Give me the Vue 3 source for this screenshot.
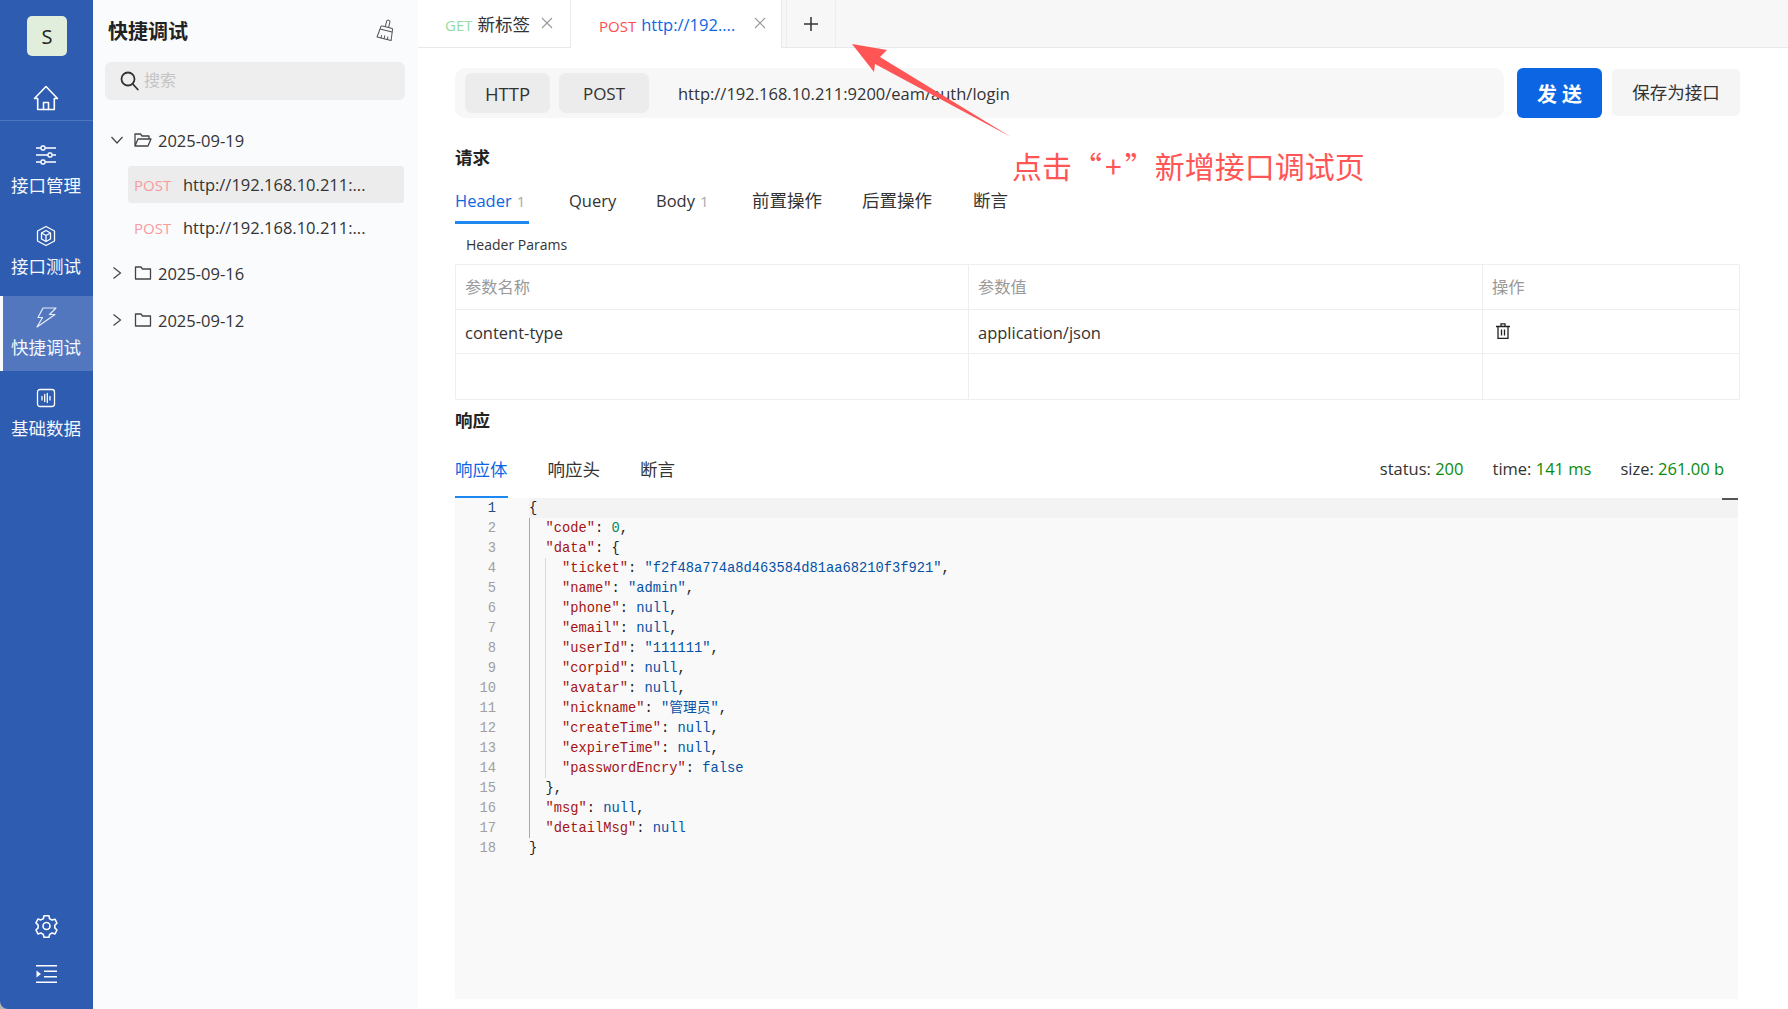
<script setup>
const navItems = [
  { key: 'api', label: '接口管理' },
  { key: 'test', label: '接口测试' },
  { key: 'quick', label: '快捷调试', active: true },
  { key: 'data', label: '基础数据' },
]
const reqTabs = [
  { label: 'Header', count: 1, active: true, lat: true, w: 74 },
  { label: 'Query', lat: true, w: 47 },
  { label: 'Body', count: 1, lat: true, w: 56 },
  { label: '前置操作', w: 70 },
  { label: '后置操作', w: 71 },
  { label: '断言', w: 35 },
]
const K = 'k', S = 's', N = 'n', V = 'v', P = 'p'
const kv = (ind, key, val, type, comma = true) => [
  [P, ind], [K, `"${key}"`], [P, ': '], [type, val], ...(comma ? [[P, ',']] : []),
]
const lines = [
  [[P, '{']],
  kv('  ', 'code', '0', N),
  [[P, '  '], [K, '"data"'], [P, ': {']],
  kv('    ', 'ticket', '"f2f48a774a8d463584d81aa68210f3f921"', S),
  kv('    ', 'name', '"admin"', S),
  kv('    ', 'phone', 'null', V),
  kv('    ', 'email', 'null', V),
  kv('    ', 'userId', '"111111"', S),
  kv('    ', 'corpid', 'null', V),
  kv('    ', 'avatar', 'null', V),
  kv('    ', 'nickname', '"管理员"', S),
  kv('    ', 'createTime', 'null', V),
  kv('    ', 'expireTime', 'null', V),
  kv('    ', 'passwordEncry', 'false', V, false),
  [[P, '  },']],
  kv('  ', 'msg', 'null', V),
  kv('  ', 'detailMsg', 'null', V, false),
  [[P, '}']],
]
</script>

<template>
  <div class="app">
    <aside class="side">
      <div class="logo-wrap"><div class="logo">S</div></div>
      <div class="home">
        <svg width="26" height="26" viewBox="0 0 26 26" fill="none" stroke="#fff" stroke-width="1.6" stroke-linejoin="round" stroke-linecap="round">
          <path d="M1.5 13.5 13 1.5l11.5 12h-3.2V24.5H4.7V13.5z" />
          <path d="M10.5 24.5v-7h5v7" />
        </svg>
      </div>
      <nav class="nav">
        <div v-for="item in navItems" :key="item.key" class="nav-item" :class="{ active: item.active }">
          <span class="nav-icon">
            <svg v-if="item.key === 'api'" width="22" height="22" viewBox="0 0 22 22" fill="none" stroke="#fff" stroke-width="1.4">
              <path d="M1 4h5M10 4h11M1 11h12M17 11h4M1 18h5M10 18h11" />
              <rect x="6" y="2" width="4" height="4" rx="1.5" />
              <rect x="13" y="9" width="4" height="4" rx="1.5" />
              <rect x="6" y="16" width="4" height="4" rx="1.5" />
            </svg>
            <svg v-else-if="item.key === 'test'" width="22" height="22" viewBox="0 0 22 22" fill="none" stroke="#fff" stroke-width="1.3" stroke-linejoin="round">
              <path d="M11 1.5 19.5 6v10L11 20.5 2.500 16V6z" />
              <path d="M11 5.500 15.500 8v6L11 16.500 6.500 14V8z" />
              <path d="M6.500 8 11 10.500 15.500 8M11 10.500v6" />
            </svg>
            <svg v-else-if="item.key === 'quick'" width="22" height="22" viewBox="0 0 22 22" fill="none" stroke="#e6ecf8" stroke-width="1.2" stroke-linejoin="round">
              <path d="M8 2h13l-6.500 6.500H20L2 21l5.500-9.500H3z" />
            </svg>
            <svg v-else width="20" height="20" viewBox="0 0 20 20" fill="none" stroke="#fff" stroke-width="1.3" stroke-linecap="round">
              <rect x="1.500" y="1.500" width="17" height="17" rx="2.500" />
              <path d="M6 8.500v3.500M8.700 6.500v7M11.300 5.500v9M14 8.500v3.500" />
            </svg>
          </span>
          <span class="nav-label">{{ item.label }}</span>
        </div>
      </nav>
      <div class="side-foot">
        <div class="foot-btn">
          <svg width="23" height="24" viewBox="0 0 23 24" fill="none" stroke="#fff" stroke-width="1.6" stroke-linejoin="round">
            <path d="M9 1.500h5l.7 3 2.500 1.400 3-.9 2 4-2.200 2.200v2.600l2.200 2.200-2 4-3-.9-2.500 1.400-.7 3H9l-.7-3-2.500-1.400-3 .9-2-4 2.200-2.200V11L.8 8.800l2-4 3 .9L8.300 4.500z" transform="translate(.2 .3) scale(.98)" />
            <circle cx="11.500" cy="12" r="3.500" />
          </svg>
        </div>
        <div class="foot-btn">
          <svg width="21" height="18" viewBox="0 0 21 18" fill="#fff">
            <rect x="0" y="0" width="21" height="1.500" />
            <rect x="8" y="5.500" width="13" height="1.500" />
            <rect x="8" y="11" width="13" height="1.500" />
            <rect x="0" y="16.500" width="21" height="1.500" />
            <path d="M0.500 5.500 5 9 0.500 12.500z" />
          </svg>
        </div>
      </div>
    </aside>

    <section class="panel">
      <div class="panel-head">
        <span class="panel-title">快捷调试</span>
        <svg width="20" height="22" viewBox="0 0 20 22" fill="none" stroke="#555" stroke-width="1" stroke-linejoin="round">
          <g transform="rotate(14 10 11)">
            <path d="M8.500 8V2.500a1.700 1.700 0 0 1 3.400 0V8" />
            <path d="M4 11.500V9.500a1.500 1.500 0 0 1 1.500-1.500h9.400a1.500 1.500 0 0 1 1.500 1.500v2z" />
            <path d="M4 11.500 3 20h14.500l-1-8.500" />
            <path d="M7 20v-3M10.200 20v-3.500M13.500 20v-3" />
          </g>
        </svg>
      </div>
      <div class="search">
        <svg width="19" height="20" viewBox="0 0 19 20" fill="none" stroke="#333" stroke-width="1.800" stroke-linecap="round">
          <circle cx="8" cy="8" r="6.500" />
          <path d="m12.800 13 5 5.500" />
        </svg>
        <span class="placeholder">搜索</span>
      </div>
      <div class="tree">
        <div class="tree-row">
          <svg class="chev" width="14" height="14" viewBox="0 0 14 14" fill="none" stroke="#444" stroke-width="1.200"><path d="m1.500 4 5.500 6 5.500-6" /></svg>
          <svg class="folder" width="18" height="14" viewBox="0 0 18 14" fill="none" stroke="#444" stroke-width="1.300" stroke-linejoin="round">
            <path d="M1 13V1h5.500L8 3h7v3M1 13 4 6h13l-3 7z" />
          </svg>
          <span class="lat date">2025-09-19</span>
        </div>
        <div class="tree-item current"><span class="method">POST</span><span class="item-url lat">http://192.168.10.211:...</span></div>
        <div class="tree-item"><span class="method">POST</span><span class="item-url lat">http://192.168.10.211:...</span></div>
        <div v-for="d in ['2025-09-16', '2025-09-12']" :key="d" class="tree-row">
          <svg class="chev" width="14" height="14" viewBox="0 0 14 14" fill="none" stroke="#444" stroke-width="1.200"><path d="m3.500 1.500 7 5.500-7 5.500" /></svg>
          <svg class="folder" width="18" height="14" viewBox="0 0 18 14" fill="none" stroke="#444" stroke-width="1.300" stroke-linejoin="round">
            <path d="M1.500 13V1h5.500L8.500 3h8v10z" />
          </svg>
          <span class="lat date">{{ d }}</span>
        </div>
      </div>
    </section>

    <main class="main">
      <div class="tabbar">
        <div class="tab first">
          <span class="tm get">GET</span><span class="tab-name">新标签</span>
          <svg class="x" width="12" height="12" viewBox="0 0 12 12" stroke="#999" stroke-width="1.100"><path d="m1 1 10 10M11 1 1 11" /></svg>
        </div>
        <div class="tab second">
          <span class="tm post">POST</span><span class="tab-name blue lat">http://192....</span>
          <svg class="x" width="12" height="12" viewBox="0 0 12 12" stroke="#999" stroke-width="1.100"><path d="m1 1 10 10M11 1 1 11" /></svg>
        </div>
        <div class="tab-add">
          <svg width="16" height="16" viewBox="0 0 16 16" stroke="#333" stroke-width="1.500"><path d="M8 1v14M1 8h14" /></svg>
        </div>
      </div>

      <div class="body">
        <div class="toolbar">
          <div class="urlbar">
            <span class="pill http">HTTP</span>
            <span class="pill post-pill">POST</span>
            <span class="url lat">http://192.168.10.211:9200/eam/auth/login</span>
          </div>
          <button class="send">发 送</button>
          <button class="save">保存为接口</button>
        </div>

        <div class="sec-title req">请求</div>
        <div class="req-tabs">
          <div v-for="t in reqTabs" :key="t.label" class="req-tab" :class="{ on: t.active }" :style="{ width: t.w + 'px' }">
            <span :class="{ lat: t.lat }">{{ t.label }}</span><span v-if="t.count" class="cnt">{{ t.count }}</span>
          </div>
        </div>
        <div class="params-label">Header Params</div>
        <div class="table">
          <div class="cell head">参数名称</div>
          <div class="cell head">参数值</div>
          <div class="cell head">操作</div>
          <div class="cell data lat">content-type</div>
          <div class="cell data lat">application/json</div>
          <div class="cell data">
            <svg class="trash" width="14" height="16" viewBox="0 0 14 16" fill="none" stroke="#222" stroke-width="1.300">
              <path d="M0 3.500h14M2 3.500v11.800h10V3.500M5 3.500V.8h4v2.700M5.500 6.500v6M8.500 6.500v6" />
            </svg>
          </div>
          <div class="cell empty"></div>
          <div class="cell empty"></div>
          <div class="cell empty"></div>
        </div>

        <div class="sec-title resp">响应</div>
        <div class="resp-bar">
          <div class="resp-tabs">
            <div class="resp-tab on">响应体</div>
            <div class="resp-tab">响应头</div>
            <div class="resp-tab">断言</div>
          </div>
          <div class="stats lat">
            <span>status: <b>200</b></span>
            <span>time: <b>141 ms</b></span>
            <span>size: <b>261.00 b</b></span>
          </div>
        </div>

        <div class="code">
          <i class="marker"></i>
          <i class="guide g1"></i>
          <i class="guide g2"></i>
          <div v-for="(line, i) in lines" :key="i" class="line" :class="{ cur: i === 0 }">
            <span class="ln">{{ i + 1 }}</span>
            <span class="src"><span v-for="(tok, j) in line" :key="j" :class="tok[0]">{{ tok[1] }}</span></span>
          </div>
        </div>
      </div>
    </main>

    <svg class="arrow" width="170" height="100" viewBox="0 0 170 100">
      <path d="M2 2 37 8 30 15 161 95 25 22 24 30z" fill="#ff5555" />
    </svg>
    <div class="note">点击“<span class="plus">+</span>”新增接口调试页</div>
  </div>
</template>

<style>
html, body { margin: 0; padding: 0; background: #b8b4b0; overflow: hidden; }
</style>

<style scoped>
.app {
  display: flex;
  width: 1788px;
  height: 1009px;
  position: relative;
  overflow: hidden;
  font-family: "Open Sans", "Noto Sans CJK SC", sans-serif;
  font-size: 17.5px;
  color: #333;
}
.lat { font-size: 16.5px; }
.side {
  width: 93px;
  flex: none;
  background: #2d5cb0;
  color: #fff;
  display: flex;
  flex-direction: column;
  border-bottom-left-radius: 8px;
}
.logo-wrap { display: flex; justify-content: center; padding-top: 16px; padding-left: 1px; }
.logo {
  width: 40px; height: 40px; border-radius: 5px; background: #e0eedb; color: #222;
  display: flex; align-items: center; justify-content: center; font-size: 20px;
}
.home {
  display: flex; justify-content: center;
  padding: 29px 1px 9px 0;
  border-bottom: 1px solid rgba(255, 255, 255, .16);
}
.home svg { display: block; }
.nav { display: flex; flex-direction: column; gap: 6px; margin-top: 13px; }
.nav-item {
  height: 75px; display: flex; flex-direction: column; align-items: center;
  padding: 10px 1px 0 0; box-sizing: border-box;
}
.nav-item.active { background: #5277bf; border-left: 3px solid #fafbfd; padding-right: 4px; }
.nav-icon { height: 22px; display: flex; align-items: center; justify-content: center; }
.nav-label { line-height: 24px; margin-top: 7px; color: #f4f7fc; }
.side-foot { margin-top: auto; padding-bottom: 11px; }
.foot-btn { height: 48px; display: flex; align-items: center; justify-content: center; }

.panel {
  width: 325px; flex: none; background: #fafbfd; box-sizing: border-box;
  padding: 0 13px 0 12px;
}
.panel-head {
  height: 62px; display: flex; align-items: center; justify-content: space-between;
  padding: 0 9px 2px 3px; box-sizing: border-box;
}
.panel-title { font-size: 20px; font-weight: 700; color: #222; }
.search {
  height: 38px; background: #eee; border-radius: 6px; display: flex; align-items: center;
  padding-left: 15px; gap: 5px;
}
.placeholder { color: #c4c4c4; font-size: 16px; line-height: 24px; margin-top: -2px; }
.tree { margin-top: 19px; display: flex; flex-direction: column; gap: 6px; }
.tree-row { height: 41px; display: flex; align-items: center; padding-left: 5px; color: #333; }
.date { padding-top: 2px; }
.chev { flex: none; margin-right: 10px; }
.folder { flex: none; margin-right: 6px; }
.tree-item {
  height: 37px; margin-left: 23px; margin-right: 1px; display: flex; align-items: center;
  padding-left: 6px; border-radius: 3px;
}
.tree-item.current { background: #ececec; }
.method { color: #f99a9f; font-size: 15px; width: 49px; flex: none; }

.main { flex: 1; min-width: 0; background: #fff; display: flex; flex-direction: column; }
.tabbar {
  height: 48px; flex: none; background: #f7f7f7; border-bottom: 1px solid #e9e9e9;
  box-sizing: border-box; display: flex;
}
.tab {
  height: 48px; background: #fff; box-sizing: border-box; display: flex; align-items: center;
  border-right: 1px solid #e9e9e9;
}
.tab.first { width: 153px; padding-left: 27px; height: 47px; }
.tab.second { width: 211px; padding-left: 28px; }
.tm { font-size: 15px; margin-right: 5px; padding-top: 3px; }
.tm.get { color: #93dca6; }
.tm.post { color: #ff4d4f; }
.tab-name { white-space: nowrap; }
.tab-name.blue { color: #0c66e4; }
.first .x { position: absolute; left: 541px; top: 17px; }
.second .x { position: absolute; left: 754px; top: 17px; }
.tab-add {
  width: 50px; height: 47px; margin-left: 4px; box-sizing: border-box;
  border-left: 1px solid #ededed; border-right: 1px solid #ededed;
  display: flex; align-items: center; justify-content: center;
}

.body { flex: 1; min-height: 0; padding: 20px 48px 0 37px; display: flex; flex-direction: column; }
.toolbar { display: flex; align-items: flex-start; height: 50px; flex: none; }
.urlbar {
  width: 1049px; height: 50px; background: #f7f7f7; border-radius: 10px; box-sizing: border-box;
  display: flex; align-items: center; padding-left: 10px;
}
.pill {
  height: 40px; background: #ececec; border-radius: 7px; display: flex; align-items: center;
  justify-content: center; color: #333;
}
.http { width: 85px; font-size: 18.5px; }
.post-pill { width: 90px; margin-left: 9px; font-size: 17px; }
.url { margin-left: 29px; color: #333; }
button { font-family: inherit; border: 0; padding: 0; }
.send {
  width: 85px; height: 50px; margin-left: 13px; border-radius: 6px; background: #0c66e4;
  color: #fff; font-size: 20px; font-weight: 700;
}
.save {
  width: 128px; height: 47px; margin: 1px 0 0 10px; padding-bottom: 3px; border-radius: 5px; background: #f5f5f5;
  color: #333; font-size: 17.5px;
}
.sec-title { font-weight: 700; line-height: 24px; color: #222; }
.sec-title.req { margin-top: 27px; }
.req-tabs { display: flex; height: 44px; margin-top: 11px; gap: 40px; }
.req-tab {
  height: 44px; line-height: 40px; box-sizing: border-box; white-space: nowrap;
  border-bottom: 3px solid transparent; color: #333;
}
.req-tab.on { color: #0c66e4; border-bottom-color: #1c88f0; }
.cnt { font-size: 15px; color: #aaa; margin-left: 5px; }
.params-label { font-size: 14px; line-height: 22px; margin: 10px 0 8px 11px; color: #333; }
.table {
  display: grid; grid-template-columns: 513px 514px 257px;
  grid-template-rows: 45px 44px 46px;
  border: 1px solid #eee; border-width: 1px 0 0 1px; border-radius: 2px;
  width: 1285px; box-sizing: border-box; flex: none;
}
.cell {
  border-right: 1px solid #eee; border-bottom: 1px solid #eee; display: flex; align-items: center;
  padding-left: 9px; box-sizing: border-box;
}
.cell.head { color: #999; font-size: 16.25px; padding-bottom: 2px; }
.cell.data { color: #333; padding-top: 1px; }
.trash { margin: -3px 0 0 4px; }
.sec-title.resp { margin-top: 8px; }
.resp-bar { height: 66px; flex: none; display: flex; justify-content: space-between; margin-right: 1px; }
.resp-tabs { display: flex; gap: 40px; }
.resp-tab { height: 66px; box-sizing: border-box; padding-top: 25px; line-height: 24px; border-bottom: 2px solid transparent; }
.resp-tab.on { color: #0c66e4; border-bottom-color: #1c88f0; }
.stats { display: flex; gap: 29px; padding-top: 25px; line-height: 24px; padding-right: 15px; color: #333; }
.stats b { font-weight: 400; color: #0a8a0a; }
.code {
  position: relative; height: 501px; margin-right: 2px; background: #f9f9f9;
  font-family: "Liberation Mono", "Noto Sans CJK SC", monospace; font-size: 13.75px; line-height: 22px;
}
.line { display: flex; height: 20px; }
.ln { width: 41px; text-align: right; color: #a0a0a0; flex: none; margin-right: 33px; }
.src { flex: 1; white-space: pre; color: #222; }
.line.cur .src { background: #f3f3f3; }
.line.cur .ln { color: #2c4f7c; }
.k { color: #a31515; }
.s, .v { color: #0451a5; }
.n { color: #098658; }
.marker { position: absolute; right: 0; top: 0; width: 16px; height: 2px; background: #555; z-index: 1; }
.guide { position: absolute; width: 1px; }
.g1 { left: 74px; top: 20px; height: 320px; background: #a8a8a8; }
.g2 { left: 90px; top: 60px; height: 220px; background: #d9d9d9; }
.arrow { position: absolute; left: 850px; top: 42px; }
.note {
  position: absolute; left: 1012px; top: 145px; font-size: 30px; line-height: 40px; color: #ff5555;
  white-space: nowrap; font-family: "Noto Sans CJK SC", sans-serif;
}
.plus { margin: 0 3px; }
</style>
